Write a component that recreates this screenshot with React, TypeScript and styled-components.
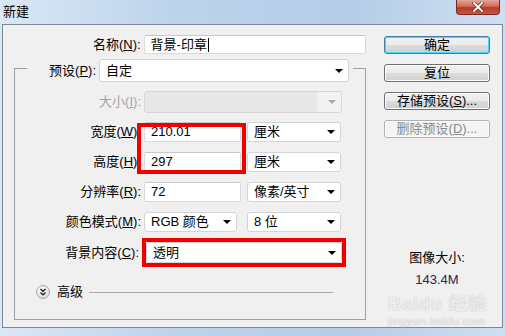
import styled, { createGlobalStyle } from "styled-components";

const GlobalStyle = createGlobalStyle`
  html, body {
    margin: 0;
    padding: 0;
    background: #c4d7ec;
  }
  * {
    box-sizing: border-box;
  }
`;

const Frame = styled.div`
  position: relative;
  width: 505px;
  height: 336px;
  display: flex;
  flex-direction: column;
  overflow: hidden;
  background: linear-gradient(90deg, #dae7f5 0%, #bcd3ec 35%, #b6cde8 70%, #cddff2 100%);
  font-family: "Liberation Sans", "Noto Sans CJK SC", sans-serif;
  font-size: 13px;
  color: #000;
`;

const TitleBar = styled.div`
  height: 24px;
  display: flex;
  align-items: flex-start;
  padding-left: 3px;
  flex-shrink: 0;
`;

const Title = styled.span`
  margin-top: 4px;
  line-height: 16px;
  font-size: 13px;
`;

const CloseButton = styled.div`
  margin-left: auto;
  margin-right: 5px;
  width: 44px;
  height: 15px;
  display: flex;
  align-items: center;
  justify-content: center;
  border: 1px solid #7a2a22;
  border-top: none;
  border-radius: 0 0 4px 4px;
  background: linear-gradient(180deg, #e3a79d 0%, #cf6a5a 45%, #b8392a 55%, #c8523f 100%);
`;

const Client = styled.div`
  flex: 1;
  margin: 0 2px 8px 2px;
  border: 1px solid #7d8897;
  background: #f0f0f0;
  display: flex;
`;

const LeftPane = styled.div`
  width: 363px;
  padding-top: 10px;
  display: flex;
  flex-direction: column;
`;

const RightPane = styled.div`
  padding: 11px 0 0 18px;
  display: flex;
  flex-direction: column;
  gap: 10px;
`;

const Row = styled.div<{ $top?: number }>`
  display: flex;
  align-items: center;
  margin-top: ${(p) => p.$top ?? 0}px;
`;

const Label = styled.label<{ $w: number; $disabled?: boolean }>`
  width: ${(p) => p.$w}px;
  padding-right: 3px;
  text-align: right;
  white-space: nowrap;
  line-height: 16px;
  color: ${(p) => (p.$disabled ? "#a3a3a3" : "#000")};

  u {
    text-underline-offset: 1px;
  }
`;

const TextBox = styled.div<{ $w: number; $h?: number }>`
  width: ${(p) => p.$w}px;
  height: ${(p) => p.$h ?? 20}px;
  display: flex;
  align-items: center;
  padding-left: 6px;
  background: #fff;
  border: 1px solid #dadada;
  border-top-color: #c8c8c8;
  border-radius: 2px;
  line-height: 16px;
  white-space: nowrap;
`;

const Caret = styled.span`
  display: inline-block;
  width: 1px;
  height: 14px;
  margin-left: 1px;
  background: #000;
`;

const Select = styled.div<{ $w: number; $h?: number; $disabled?: boolean }>`
  width: ${(p) => p.$w}px;
  height: ${(p) => p.$h ?? 20}px;
  display: flex;
  align-items: center;
  justify-content: space-between;
  padding: 0 5px 0 6px;
  background: ${(p) =>
    p.$disabled ? "linear-gradient(90deg, #e8e8e8 0 88%, #f2f2f2 88%)" : "#fff"};
  border: 1px solid ${(p) => (p.$disabled ? "#d6d6d6" : "#d4d4d4")};
  border-radius: 3px;
  line-height: 16px;
  white-space: nowrap;
`;

const Arrow = styled.span<{ $disabled?: boolean }>`
  width: 0;
  height: 0;
  border-left: 4px solid transparent;
  border-right: 4px solid transparent;
  border-top: 4px solid ${(p) => (p.$disabled ? "#a8a8a8" : "#000")};
`;

const GroupBox = styled.div`
  margin: 14px 0 0 11px;
  width: 352px;
  height: 252px;
  border: 1px solid #a0a0a0;
  display: flex;
  flex-direction: column;
`;

const GroupHeader = styled.div`
  margin: -10px 0 0 12px;
  padding-right: 4px;
  align-self: flex-start;
  display: flex;
  align-items: center;
  background: #f0f0f0;
`;

const Units = styled.div<{ $gap?: number }>`
  margin-left: ${(p) => p.$gap ?? 6}px;
`;

const Marked = styled.div`
  position: relative;
  display: flex;
  flex-direction: column;
`;

const RedBox = styled.div`
  position: absolute;
  left: 122px;
  top: 10px;
  width: 109px;
  height: 51px;
  border: 4px solid #f20000;
  pointer-events: none;
`;

const RedFrame = styled.div`
  border: 4px solid #f20000;
`;

const Expander = styled.div`
  width: 14px;
  height: 14px;
  margin-left: 21px;
  display: flex;
`;

const AdvancedText = styled.span`
  margin-left: 7px;
  line-height: 16px;
`;

const Rule = styled.div`
  flex: 1;
  height: 1px;
  margin: 0 32px 0 6px;
  background: #a8a8a8;
`;

const Button = styled.div<{ $default?: boolean; $disabled?: boolean }>`
  width: 106px;
  height: 18px;
  display: flex;
  align-items: center;
  justify-content: center;
  border-radius: 3px;
  line-height: 16px;
  white-space: nowrap;
  color: ${(p) => (p.$disabled ? "#8a8a8a" : "#000")};
  border: 1px solid ${(p) => (p.$default ? "#3c7fb1" : p.$disabled ? "#adb2b5" : "#707070")};
  background: ${(p) =>
    p.$disabled
      ? "#f4f4f4"
      : "linear-gradient(180deg, #f2f2f2 0%, #ebebeb 49%, #dddddd 51%, #cfcfcf 100%)"};
  box-shadow: ${(p) => (p.$default ? "inset 0 0 0 1px #48d4fb" : "inset 0 0 0 1px #fcfcfc")};

  u {
    text-underline-offset: 1px;
  }
`;

const ImageSize = styled.div`
  margin-top: 102px;
  width: 106px;
  display: flex;
  flex-direction: column;
  align-items: center;
  gap: 6px;
  line-height: 16px;
`;

const SizeValue = styled.span`
  color: #2e2450;
  font-size: 13px;
`;

const Watermark = styled.div`
  position: absolute;
  left: 388px;
  top: 296px;
  display: flex;
  flex-direction: column;
  align-items: flex-start;
  color: rgba(255, 255, 255, 0.7);
  text-shadow: 0 0 1px #c4c4c4, 0 0 1px #c4c4c4;
  pointer-events: none;
`;

const MarkBig = styled.span`
  font-size: 18px;
  font-weight: bold;
  line-height: 16px;
  letter-spacing: 1px;
`;

const MarkSmall = styled.span`
  font-size: 11px;
  line-height: 12px;
  margin-top: 3px;
  letter-spacing: 0.5px;
`;

function CloseIcon() {
  return (
    <svg width="12" height="10" viewBox="0 0 12 10">
      <path d="M2 1 L10 9 M10 1 L2 9" stroke="#5a1a14" strokeWidth="3.2" strokeLinecap="square" />
      <path d="M2 1 L10 9 M10 1 L2 9" stroke="#fff" strokeWidth="2" strokeLinecap="square" />
    </svg>
  );
}

function ExpandIcon() {
  return (
    <svg width="14" height="14" viewBox="0 0 14 14">
      <defs>
        <radialGradient id="exp" cx="40%" cy="35%" r="70%">
          <stop offset="0%" stopColor="#ffffff" />
          <stop offset="100%" stopColor="#d6d6d6" />
        </radialGradient>
      </defs>
      <circle cx="7" cy="7" r="6.5" fill="url(#exp)" stroke="#a9a9a9" />
      <path d="M4.5 4 L7 6.3 L9.5 4 M4.5 7.5 L7 9.8 L9.5 7.5" fill="none" stroke="#222" strokeWidth="1.4" />
    </svg>
  );
}

export default function App() {
  return (
    <>
      <GlobalStyle />
      <Frame>
        <TitleBar>
          <Title>新建</Title>
          <CloseButton>
            <CloseIcon />
          </CloseButton>
        </TitleBar>
        <Client>
          <LeftPane>
            <Row>
              <Label $w={141}>
                名称(<u>N</u>):
              </Label>
              <TextBox $w={223} $h={19}>
                背景-印章
                <Caret />
              </TextBox>
            </Row>
            <GroupBox>
              <GroupHeader>
                <Label $w={72}>
                  预设(<u>P</u>):
                </Label>
                <Select $w={250} $h={23}>
                  自定
                  <Arrow />
                </Select>
              </GroupHeader>
              <Row $top={9}>
                <Label $w={129} $disabled>
                  大小(<u>I</u>):
                </Label>
                <Select $w={198} $h={22} $disabled>
                  <span />
                  <Arrow $disabled />
                </Select>
              </Row>
              <Marked>
                <Row $top={9}>
                  <Label $w={129}>
                    宽度(<u>W</u>):
                  </Label>
                  <TextBox $w={97}>210.01</TextBox>
                  <Units>
                    <Select $w={94}>
                      厘米
                      <Arrow />
                    </Select>
                  </Units>
                </Row>
                <Row $top={10}>
                  <Label $w={129}>
                    高度(<u>H</u>):
                  </Label>
                  <TextBox $w={97}>297</TextBox>
                  <Units>
                    <Select $w={94}>
                      厘米
                      <Arrow />
                    </Select>
                  </Units>
                </Row>
                <RedBox />
              </Marked>
              <Row $top={10}>
                <Label $w={129}>
                  分辨率(<u>R</u>):
                </Label>
                <TextBox $w={97}>72</TextBox>
                <Units>
                  <Select $w={94}>
                    像素/英寸
                    <Arrow />
                  </Select>
                </Units>
              </Row>
              <Row $top={10}>
                <Label $w={129}>
                  颜色模式(<u>M</u>):
                </Label>
                <Select $w={93}>
                  RGB 颜色
                  <Arrow />
                </Select>
                <Units $gap={10}>
                  <Select $w={94}>
                    8 位
                    <Arrow />
                  </Select>
                </Units>
              </Row>
              <Row $top={6}>
                <Label $w={127}>
                  背景内容(<u>C</u>):
                </Label>
                <RedFrame>
                  <Select $w={196} $h={21}>
                    透明
                    <Arrow />
                  </Select>
                </RedFrame>
              </Row>
              <Row $top={17}>
                <Expander>
                  <ExpandIcon />
                </Expander>
                <AdvancedText>高级</AdvancedText>
                <Rule />
              </Row>
            </GroupBox>
          </LeftPane>
          <RightPane>
            <Button $default>确定</Button>
            <Button>复位</Button>
            <Button>
              存储预设(<u>S</u>)...
            </Button>
            <Button $disabled>
              删除预设(<u>D</u>)...
            </Button>
            <ImageSize>
              <span>图像大小:</span>
              <SizeValue>143.4M</SizeValue>
            </ImageSize>
          </RightPane>
        </Client>
        <Watermark>
          <MarkBig>Baidu 经验</MarkBig>
          <MarkSmall>jingyan.baidu.com</MarkSmall>
        </Watermark>
      </Frame>
    </>
  );
}
